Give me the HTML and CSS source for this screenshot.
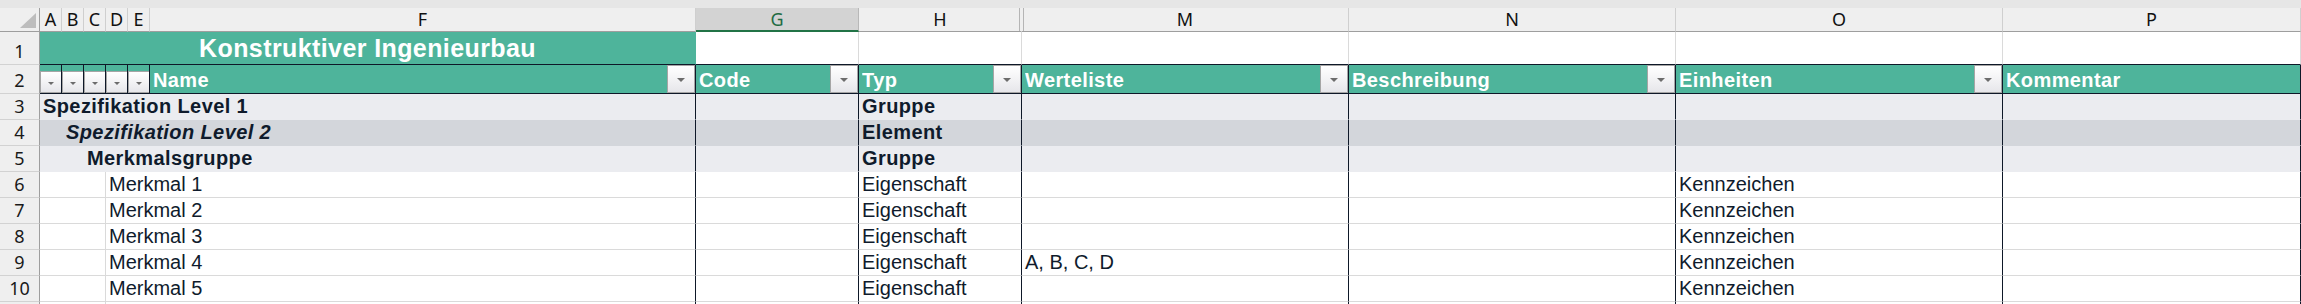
FILE: index.html
```html
<!DOCTYPE html>
<html lang="de">
<head>
<meta charset="utf-8">
<title>Konstruktiver Ingenieurbau</title>
<link rel="stylesheet" href="styles.css">
</head>
<body>
<div class="topbar"></div>
<div class="sheet">
  <!-- column headers -->
  <div class="colhdr corner"><svg class="corner-tri" width="39" height="23" viewBox="0 0 39 23"><polygon points="20,20 36,20 36,5" fill="#bdbdbd"/></svg></div>
  <div class="colhdr">A</div>
  <div class="colhdr">B</div>
  <div class="colhdr">C</div>
  <div class="colhdr">D</div>
  <div class="colhdr">E</div>
  <div class="colhdr">F</div>
  <div class="colhdr sel">G</div>
  <div class="colhdr hid-r">H</div>
  <div class="colhdr hid-l">M</div>
  <div class="colhdr">N</div>
  <div class="colhdr">O</div>
  <div class="colhdr">P</div>

  <!-- row 1 -->
  <div class="rh">1</div>
  <div class="c title span6">Konstruktiver Ingenieurbau</div>
  <div class="c r1"></div>
  <div class="c r1"></div>
  <div class="c r1"></div>
  <div class="c r1"></div>
  <div class="c r1"></div>
  <div class="c r1"></div>

  <!-- row 2 -->
  <div class="rh">2</div>
  <div class="c th mini"><span class="fbtn small"></span></div>
  <div class="c th mini"><span class="fbtn small"></span></div>
  <div class="c th mini"><span class="fbtn small"></span></div>
  <div class="c th mini"><span class="fbtn small"></span></div>
  <div class="c th mini"><span class="fbtn small"></span></div>
  <div class="c th"><span class="th-label">Name</span><span class="fbtn"></span></div>
  <div class="c th"><span class="th-label">Code</span><span class="fbtn"></span></div>
  <div class="c th"><span class="th-label">Typ</span><span class="fbtn"></span></div>
  <div class="c th"><span class="th-label">Werteliste</span><span class="fbtn"></span></div>
  <div class="c th"><span class="th-label">Beschreibung</span><span class="fbtn"></span></div>
  <div class="c th"><span class="th-label">Einheiten</span><span class="fbtn"></span></div>
  <div class="c th"><span class="th-label">Kommentar</span></div>

  <!-- row 3 -->
  <div class="rh">3</div>
  <div class="c f1 span6 b">Spezifikation Level 1</div>
  <div class="c f1"></div>
  <div class="c f1 b">Gruppe</div>
  <div class="c f1"></div>
  <div class="c f1"></div>
  <div class="c f1"></div>
  <div class="c f1"></div>

  <!-- row 4 -->
  <div class="rh">4</div>
  <div class="c f2 span6 b i lvl2">Spezifikation Level 2</div>
  <div class="c f2"></div>
  <div class="c f2 b">Element</div>
  <div class="c f2"></div>
  <div class="c f2"></div>
  <div class="c f2"></div>
  <div class="c f2"></div>

  <!-- row 5 -->
  <div class="rh">5</div>
  <div class="c f1 span6 b lvl3">Merkmalsgruppe</div>
  <div class="c f1"></div>
  <div class="c f1 b">Gruppe</div>
  <div class="c f1"></div>
  <div class="c f1"></div>
  <div class="c f1"></div>
  <div class="c f1"></div>

  <!-- row 6 -->
  <div class="rh">6</div>
  <div class="c w span3 grid"></div>
  <div class="c w span3">Merkmal 1</div>
  <div class="c w"></div>
  <div class="c w">Eigenschaft</div>
  <div class="c w"></div>
  <div class="c w"></div>
  <div class="c w">Kennzeichen</div>
  <div class="c w"></div>

  <!-- row 7 -->
  <div class="rh">7</div>
  <div class="c w span3 grid"></div>
  <div class="c w span3">Merkmal 2</div>
  <div class="c w"></div>
  <div class="c w">Eigenschaft</div>
  <div class="c w"></div>
  <div class="c w"></div>
  <div class="c w">Kennzeichen</div>
  <div class="c w"></div>

  <!-- row 8 -->
  <div class="rh">8</div>
  <div class="c w span3 grid"></div>
  <div class="c w span3">Merkmal 3</div>
  <div class="c w"></div>
  <div class="c w">Eigenschaft</div>
  <div class="c w"></div>
  <div class="c w"></div>
  <div class="c w">Kennzeichen</div>
  <div class="c w"></div>

  <!-- row 9 -->
  <div class="rh">9</div>
  <div class="c w span3 grid"></div>
  <div class="c w span3">Merkmal 4</div>
  <div class="c w"></div>
  <div class="c w">Eigenschaft</div>
  <div class="c w">A, B, C, D</div>
  <div class="c w"></div>
  <div class="c w">Kennzeichen</div>
  <div class="c w"></div>

  <!-- row 10 -->
  <div class="rh">10</div>
  <div class="c w span3 grid"></div>
  <div class="c w span3">Merkmal 5</div>
  <div class="c w"></div>
  <div class="c w">Eigenschaft</div>
  <div class="c w"></div>
  <div class="c w"></div>
  <div class="c w">Kennzeichen</div>
  <div class="c w"></div>

  <!-- row 11 (only its top edge is visible) -->
  <div class="rh stub"></div>
  <div class="c w stub span3 grid"></div>
  <div class="c w stub span3"></div>
  <div class="c w stub"></div>
  <div class="c w stub"></div>
  <div class="c w stub"></div>
  <div class="c w stub"></div>
  <div class="c w stub"></div>
  <div class="c w stub"></div>
</div>
</body>
</html>
```

FILE: styles.css
```css
html, body {
  margin: 0;
  padding: 0;
  background: #ffffff;
}

body {
  width: 2301px;
  height: 304px;
  overflow: hidden;
  font-family: "Liberation Sans", Arial, sans-serif;
}

.topbar {
  height: 8px;
  background: #e6e6e6;
}

.sheet {
  display: grid;
  grid-template-columns: 40px repeat(5, 22px) 546px 163px 163px 327px 327px 327px 298px;
  grid-template-rows: 24px 33px 29px repeat(8, 26px) 2px;
}

/* column headers */
.colhdr {
  box-sizing: border-box;
  background: #efefef;
  border-right: 1px solid #cfcfcf;
  border-bottom: 1px solid #9e9e9e;
  font-family: "Noto Sans", "Open Sans", sans-serif;
  font-size: 18px;
  line-height: 23px;
  color: #111111;
  text-align: center;
}

.colhdr.corner {
  border-right-color: #9e9e9e;
  display: flex;
}

.corner-tri {
  display: block;
}

.colhdr.sel {
  background: #d3d3d3;
  color: #1d6b42;
  border-bottom: 2px solid #217346;
  line-height: 22px;
  border-right-color: #b8b8b8;
}

.colhdr.hid-r {
  border-right-color: #efefef;
  box-shadow: inset -1px 0 0 #efefef, inset -2px 0 0 #b5b5b5;
}

.colhdr.hid-l {
  box-shadow: inset 1px 0 0 #efefef, inset 2px 0 0 #b5b5b5;
}

/* row headers */
.rh {
  box-sizing: border-box;
  background: #efefef;
  border-right: 1px solid #9e9e9e;
  border-bottom: 1px solid #d2d2d2;
  font-family: "Noto Sans", "Open Sans", sans-serif;
  font-size: 18px;
  line-height: 25px;
  color: #1a1a1a;
  display: flex;
  justify-content: center;
  align-items: flex-end;
}

/* cells */
.c {
  box-sizing: border-box;
  border-right: 1px solid #0e1828;
  border-bottom: 1px solid #dadada;
  padding-left: 3px;
  font-size: 20px;
  line-height: 25px;
  color: #0f1b2c;
  white-space: nowrap;
  overflow: hidden;
}

.stub {
  border-bottom: 0;
}

.span6 { grid-column: span 6; }
.span3 { grid-column: span 3; }

.b {
  font-weight: bold;
  letter-spacing: 0.4px;
}

.i { font-style: italic; }

.lvl2 { padding-left: 26px; }
.lvl3 { padding-left: 47px; }

.f1 {
  background: #ebecf0;
  border-bottom-color: #ebecf0;
}

.f2 {
  background: #d3d6db;
  border-bottom-color: #d3d6db;
}

.w {
  background: #ffffff;
}

.grid {
  border-right-color: #dadada;
}

/* row 1 */
.title {
  background: #4eb49b;
  border-right-color: #4eb49b;
  border-bottom-color: #0e1828;
  color: #ffffff;
  font-weight: bold;
  font-size: 25px;
  letter-spacing: 0.4px;
  text-align: center;
  padding: 1px 0 0 0;
  line-height: 31px;
}

.r1 {
  background: #ffffff;
  border-right-color: #dadada;
  border-bottom-color: #0e1828;
}

/* row 2: table header */
.th {
  background: #4eb49b;
  border-bottom-color: #0e1828;
  color: #ffffff;
  font-weight: bold;
  letter-spacing: 0.4px;
  display: flex;
  align-items: flex-end;
}

.th-label {
  flex: 1;
  line-height: 26px;
  padding-top: 2px;
  overflow: hidden;
}

.th.mini {
  padding-left: 0;
}

.fbtn {
  flex: none;
  box-sizing: border-box;
  width: 28px;
  height: 28px;
  border: 1px solid #a5a5a5;
  background: linear-gradient(to bottom, #ffffff 0%, #f3f3f5 50%, #e6e6ea 100%);
  display: flex;
  align-items: center;
  justify-content: center;
}

.fbtn::after {
  content: "";
  width: 0;
  height: 0;
  border-left: 4.5px solid transparent;
  border-right: 4.5px solid transparent;
  border-top: 4px solid #6c6c6c;
  margin-top: 1px;
}

.fbtn.small {
  width: 22px;
  height: 22px;
  margin-right: -1px;
}

.fbtn.small::after {
  border-left-width: 3.5px;
  border-right-width: 3.5px;
  border-top-width: 3.5px;
  margin-top: 2px;
}
```
